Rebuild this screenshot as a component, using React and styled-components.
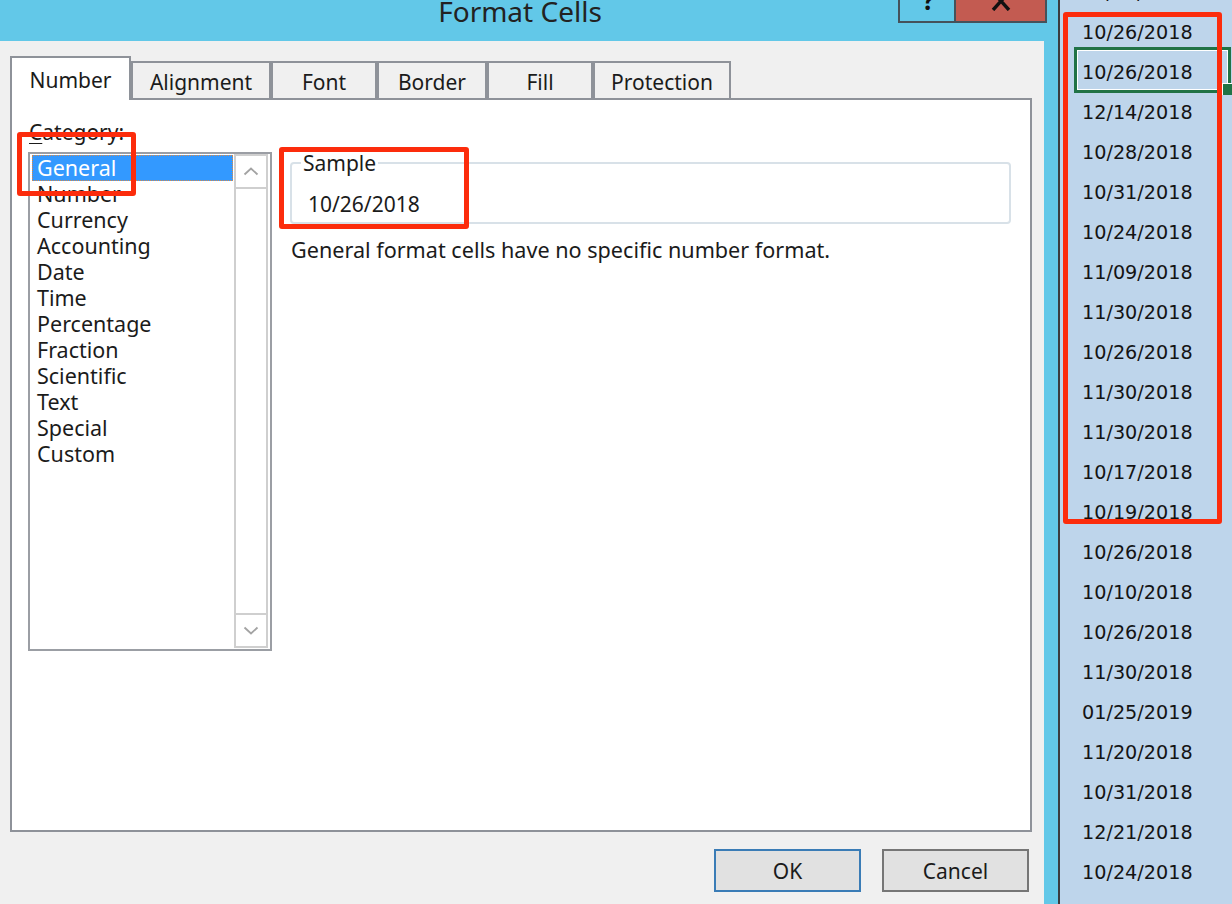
import React from "react";
import styled, { createGlobalStyle } from "styled-components";

const GlobalStyle = createGlobalStyle`
  html, body { margin: 0; padding: 0; background: #f0f0f0; }
  body { overflow: hidden; }
  * { box-sizing: border-box; }
`;

const UI_FONT = `"Noto Sans", "Segoe UI", sans-serif`;
const TAB_BORDER = "#8e9299";

const Screen = styled.div`
  position: relative;
  display: flex;
  width: 1232px;
  height: 904px;
  overflow: hidden;
  font-family: ${UI_FONT};
  color: #1b1b1b;
`;

const Window = styled.div`
  width: 1058px;
  height: 100%;
  display: flex;
  flex-direction: column;
  background: #62c8e8;
`;

const TitleBar = styled.div`
  height: 41px;
  flex: none;
  display: flex;
  align-items: flex-start;
`;

const Title = styled.div`
  flex: 1;
  padding-left: 142px;
  text-align: center;
  font-size: 28px;
  line-height: 22px;
  color: #222;
`;

const CaptionButtons = styled.div`
  display: flex;
  height: 23px;
  margin-right: 11px;
`;

const HelpButton = styled.div`
  width: 56px;
  height: 23px;
  border-left: 2px solid #45525b;
  border-bottom: 2px solid #45525b;
  display: flex;
  justify-content: center;
  align-items: flex-start;
  overflow: hidden;
`;

const HelpGlyph = styled.span`
  display: block;
  font-size: 26px;
  font-weight: 700;
  line-height: 0;
  height: 0;
  color: #111;
  margin-left: 3px;
`;

const CloseButton = styled.div`
  width: 93px;
  height: 23px;
  background: #c35b51;
  border: 2px solid #45525b;
  border-top: none;
  display: flex;
  justify-content: center;
  align-items: flex-start;
`;

const DialogBody = styled.div`
  width: 1044px;
  flex: 1;
  display: flex;
  flex-direction: column;
  background: #f0f0f0;
  padding: 15px 12px 0 10px;
`;

const TabRow = styled.div`
  display: flex;
  align-items: flex-end;
  height: 44px;
  flex: none;
  margin-bottom: -2px;
  position: relative;
  z-index: 1;
`;

const Tab = styled.div`
  width: ${(p) => p.$w}px;
  height: ${(p) => (p.$active ? 44 : 37)}px;
  margin-bottom: ${(p) => (p.$active ? 0 : 2)}px;
  border: 2px solid ${TAB_BORDER};
  border-bottom: none;
  background: ${(p) => (p.$active ? "#ffffff" : "#f0f0f0")};
  display: flex;
  align-items: center;
  justify-content: center;
  padding-top: ${(p) => (p.$active ? 1 : 2)}px;
  font-size: 21px;
  line-height: 26px;
  color: #1b1b1b;
`;

const TabPanel = styled.div`
  flex: 1;
  display: flex;
  align-items: flex-start;
  gap: 18px;
  background: #ffffff;
  border: 2px solid ${TAB_BORDER};
  padding: 19px 19px 0 16px;
`;

const CategoryColumn = styled.div`
  width: 244px;
  display: flex;
  flex-direction: column;
  gap: 7px;
`;

const FieldLabel = styled.div`
  font-size: 21px;
  line-height: 26px;
  padding-left: 1px;
  u { text-decoration-thickness: 1px; text-underline-offset: 3px; }
`;

const ListBox = styled.div`
  height: 499px;
  display: flex;
  border: 2px solid #9b9ea4;
  background: #fff;
`;

const ListItems = styled.div`
  flex: 1;
  padding: 1px 1px 0 2px;
`;

const ListItem = styled.div`
  height: 26px;
  line-height: 26px;
  font-size: 21.5px;
  padding-left: 5px;
  white-space: nowrap;
  background: ${(p) => (p.$selected ? "#3399ff" : "transparent")};
  color: ${(p) => (p.$selected ? "#ffffff" : "#1b1b1b")};
  outline: ${(p) => (p.$selected ? "1px dotted #d98a48" : "none")};
  outline-offset: -1px;
`;

const ScrollBar = styled.div`
  width: 34px;
  margin: 0 2px 1px 0;
  display: flex;
  flex-direction: column;
  border: 2px solid #cfcfcf;
`;

const ScrollButton = styled.div`
  height: 33px;
  flex: none;
  display: flex;
  align-items: center;
  justify-content: center;
  ${(p) => (p.$down ? "border-top: 2px solid #cfcfcf;" : "border-bottom: 2px solid #cfcfcf;")}
`;

const ScrollTrack = styled.div`
  flex: 1;
`;

const DetailColumn = styled.div`
  flex: 1;
  margin-top: 31px;
  display: flex;
  flex-direction: column;
`;

const SampleGroup = styled.fieldset`
  margin: 0;
  min-width: 0;
  padding: 0 0 5px 9px;
  border: 2px solid #d8e1e8;
  border-radius: 4px;
`;

const GroupLegend = styled.legend`
  padding: 0 2px;
  font-size: 21px;
  line-height: 26px;
`;

const SampleValue = styled.div`
  padding: 15px 0 0 7px;
  font-size: 21px;
  line-height: 26px;
`;

const Description = styled.div`
  margin-top: 13px;
  padding-left: 1px;
  font-size: 21.6px;
  line-height: 26px;
`;

const ButtonRow = styled.div`
  display: flex;
  justify-content: flex-end;
  gap: 21px;
  margin: 17px 3px 12px 0;
  flex: none;
`;

const DialogButton = styled.div`
  width: 147px;
  height: 43px;
  display: flex;
  align-items: center;
  justify-content: center;
  background: #e1e1e1;
  border: 2px solid ${(p) => (p.$default ? "#3a7cb6" : "#767676")};
  font-size: 21px;
  color: #1b1b1b;
`;

const SheetColumn = styled.div`
  flex: 1;
  height: 100%;
  overflow: hidden;
  background: #bed5eb;
  border-left: 2px solid #3a3d40;
`;

const CellList = styled.div`
  margin-top: -27px;
`;

const Cell = styled.div`
  position: relative;
  height: 40px;
  line-height: 40px;
  padding-left: 22px;
  font-family: "DejaVu Sans", Verdana, sans-serif;
  font-size: 19.2px;
  color: #141414;
  white-space: nowrap;
`;

const ActiveFrame = styled.div`
  position: absolute;
  left: 14px;
  right: 1px;
  top: -6px;
  bottom: 0;
  border: 3px solid #217346;
  box-shadow: inset 0 0 0 1px #ffffff;
  pointer-events: none;
`;

const FillHandle = styled.div`
  position: absolute;
  left: 162px;
  top: 30px;
  width: 11px;
  height: 12px;
  background: #217346;
  border-left: 1px solid #fff;
  border-top: 1px solid #fff;
`;

const Annotation = styled.div`
  position: absolute;
  left: ${(p) => p.$x}px;
  top: ${(p) => p.$y}px;
  width: ${(p) => p.$w}px;
  height: ${(p) => p.$h}px;
  border: 5px solid #fc2c0c;
  border-radius: 3px;
  pointer-events: none;
  z-index: 10;
`;

const tabs = [
  { label: "Number", w: 121 },
  { label: "Alignment", w: 140 },
  { label: "Font", w: 106 },
  { label: "Border", w: 110 },
  { label: "Fill", w: 106 },
  { label: "Protection", w: 138 },
];

const categories = [
  "General",
  "Number",
  "Currency",
  "Accounting",
  "Date",
  "Time",
  "Percentage",
  "Fraction",
  "Scientific",
  "Text",
  "Special",
  "Custom",
];

const dates = [
  "10/25/2018",
  "10/26/2018",
  "10/26/2018",
  "12/14/2018",
  "10/28/2018",
  "10/31/2018",
  "10/24/2018",
  "11/09/2018",
  "11/30/2018",
  "10/26/2018",
  "11/30/2018",
  "11/30/2018",
  "10/17/2018",
  "10/19/2018",
  "10/26/2018",
  "10/10/2018",
  "10/26/2018",
  "11/30/2018",
  "01/25/2019",
  "11/20/2018",
  "10/31/2018",
  "12/21/2018",
  "10/24/2018",
  "10/26/2018",
];

const Chevron = ({ down }) => (
  <svg width="16" height="9" viewBox="0 0 16 9" fill="none">
    <path
      d={down ? "M1.5 1.5 L8 7.5 L14.5 1.5" : "M1.5 7.5 L8 1.5 L14.5 7.5"}
      stroke="#a3a3a3"
      strokeWidth="1.8"
    />
  </svg>
);

export default function App() {
  return (
    <>
      <GlobalStyle />
      <Screen>
        <Window>
          <TitleBar>
            <Title>Format Cells</Title>
            <CaptionButtons>
              <HelpButton>
                <HelpGlyph>?</HelpGlyph>
              </HelpButton>
              <CloseButton>
                <svg width="20" height="11" viewBox="0 0 20 11">
                  <path d="M1 -9 L18 10 M19 -9 L2 10" stroke="#111" strokeWidth="3.4" />
                </svg>
              </CloseButton>
            </CaptionButtons>
          </TitleBar>
          <DialogBody>
            <TabRow>
              {tabs.map((t) => (
                <Tab key={t.label} $w={t.w} $active={t.label === "Number"}>
                  {t.label}
                </Tab>
              ))}
            </TabRow>
            <TabPanel>
              <CategoryColumn>
                <FieldLabel>
                  <u>C</u>ategory:
                </FieldLabel>
                <ListBox>
                  <ListItems>
                    {categories.map((c, i) => (
                      <ListItem key={c} $selected={i === 0}>
                        {c}
                      </ListItem>
                    ))}
                  </ListItems>
                  <ScrollBar>
                    <ScrollButton>
                      <Chevron />
                    </ScrollButton>
                    <ScrollTrack />
                    <ScrollButton $down>
                      <Chevron down />
                    </ScrollButton>
                  </ScrollBar>
                </ListBox>
              </CategoryColumn>
              <DetailColumn>
                <SampleGroup>
                  <GroupLegend>Sample</GroupLegend>
                  <SampleValue>10/26/2018</SampleValue>
                </SampleGroup>
                <Description>General format cells have no specific number format.</Description>
              </DetailColumn>
            </TabPanel>
            <ButtonRow>
              <DialogButton $default>OK</DialogButton>
              <DialogButton>Cancel</DialogButton>
            </ButtonRow>
          </DialogBody>
        </Window>
        <SheetColumn>
          <CellList>
            {dates.map((d, i) => (
              <Cell key={i}>
                {d}
                {i === 2 && (
                  <>
                    <ActiveFrame />
                    <FillHandle />
                  </>
                )}
              </Cell>
            ))}
          </CellList>
        </SheetColumn>
        <Annotation $x={17} $y={132} $w={119} $h={64} />
        <Annotation $x={279} $y={147} $w={190} $h={82} />
        <Annotation $x={1063} $y={12} $w={159} $h={512} />
      </Screen>
    </>
  );
}
